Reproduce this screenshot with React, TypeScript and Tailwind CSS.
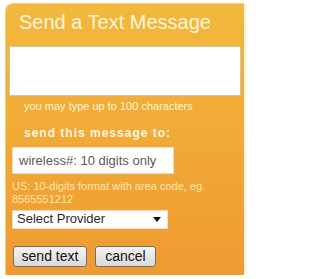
import React from 'react';

const font = { fontFamily: '"Liberation Sans", Arial, sans-serif' };

export default function App() {
  return (
    <div className="w-[247px] h-[279px] bg-white overflow-hidden" style={font}>
      <div className="flex pt-[3px] pl-[5px]">
        <form className="w-[239px] h-[272px] rounded-tl-[8px] bg-gradient-to-b from-[#f3b83d] to-[#ef9a31] border-l border-t border-[#f6cf7a] flex flex-col">
          <h1 className="ml-[13px] mt-[7px] text-[20px] leading-[23px] text-[#fff6dc]">
            Send a Text Message
          </h1>
          <textarea
            className="ml-[3px] mt-[12px] w-[232px] h-[50px] bg-white border border-[#cfc4a8] resize-none outline-none"
            aria-label="message"
          />
          <p className="ml-[18px] mt-[4px] text-[11px] leading-[13px] text-[#fff3d4]">
            you may type up to 100 characters
          </p>
          <p className="ml-[18px] mt-[13px] text-[12px] leading-[14px] font-bold tracking-[1px] text-[#fff6e0]">
            send this message to:
          </p>
          <div className="ml-[6px] mt-[7px] w-[162px] h-[27px] bg-white border border-[#eadfc4] flex items-center pl-[6px] text-[13px] text-[#5a5a5a]">
            wireless#: 10 digits only
          </div>
          <p className="ml-[6px] mt-[6px] w-[215px] text-[11px] leading-[13.3px] text-[#fde5ae]">
            US: 10-digits format with area code, eg. 8565551212
          </p>
          <div className="ml-[6px] mt-[3px] w-[156px] h-[19px] bg-white border border-[#eadfc4] flex items-center justify-between pl-[4px] pr-[6px] text-[13px] text-[#2a2a2a]">
            <span>Select Provider</span>
            <svg width="8" height="5" viewBox="0 0 8 5">
              <path d="M0 0h8L4 5z" fill="#111" />
            </svg>
          </div>
          <div className="ml-[7px] mt-[17px] flex gap-[8px]">
            <button
              type="button"
              className="w-[74px] h-[21px] rounded-[3px] border border-[#707070] bg-gradient-to-b from-[#f4f4f4] to-[#d9d9d9] text-[14px] leading-none text-[#111]"
            >
              send text
            </button>
            <button
              type="button"
              className="w-[61px] h-[21px] rounded-[3px] border border-[#707070] bg-gradient-to-b from-[#f4f4f4] to-[#d9d9d9] text-[14px] leading-none text-[#111]"
            >
              cancel
            </button>
          </div>
        </form>
        <div className="flex-1 h-[272px] bg-[#fdf6dc]" />
      </div>
    </div>
  );
}
